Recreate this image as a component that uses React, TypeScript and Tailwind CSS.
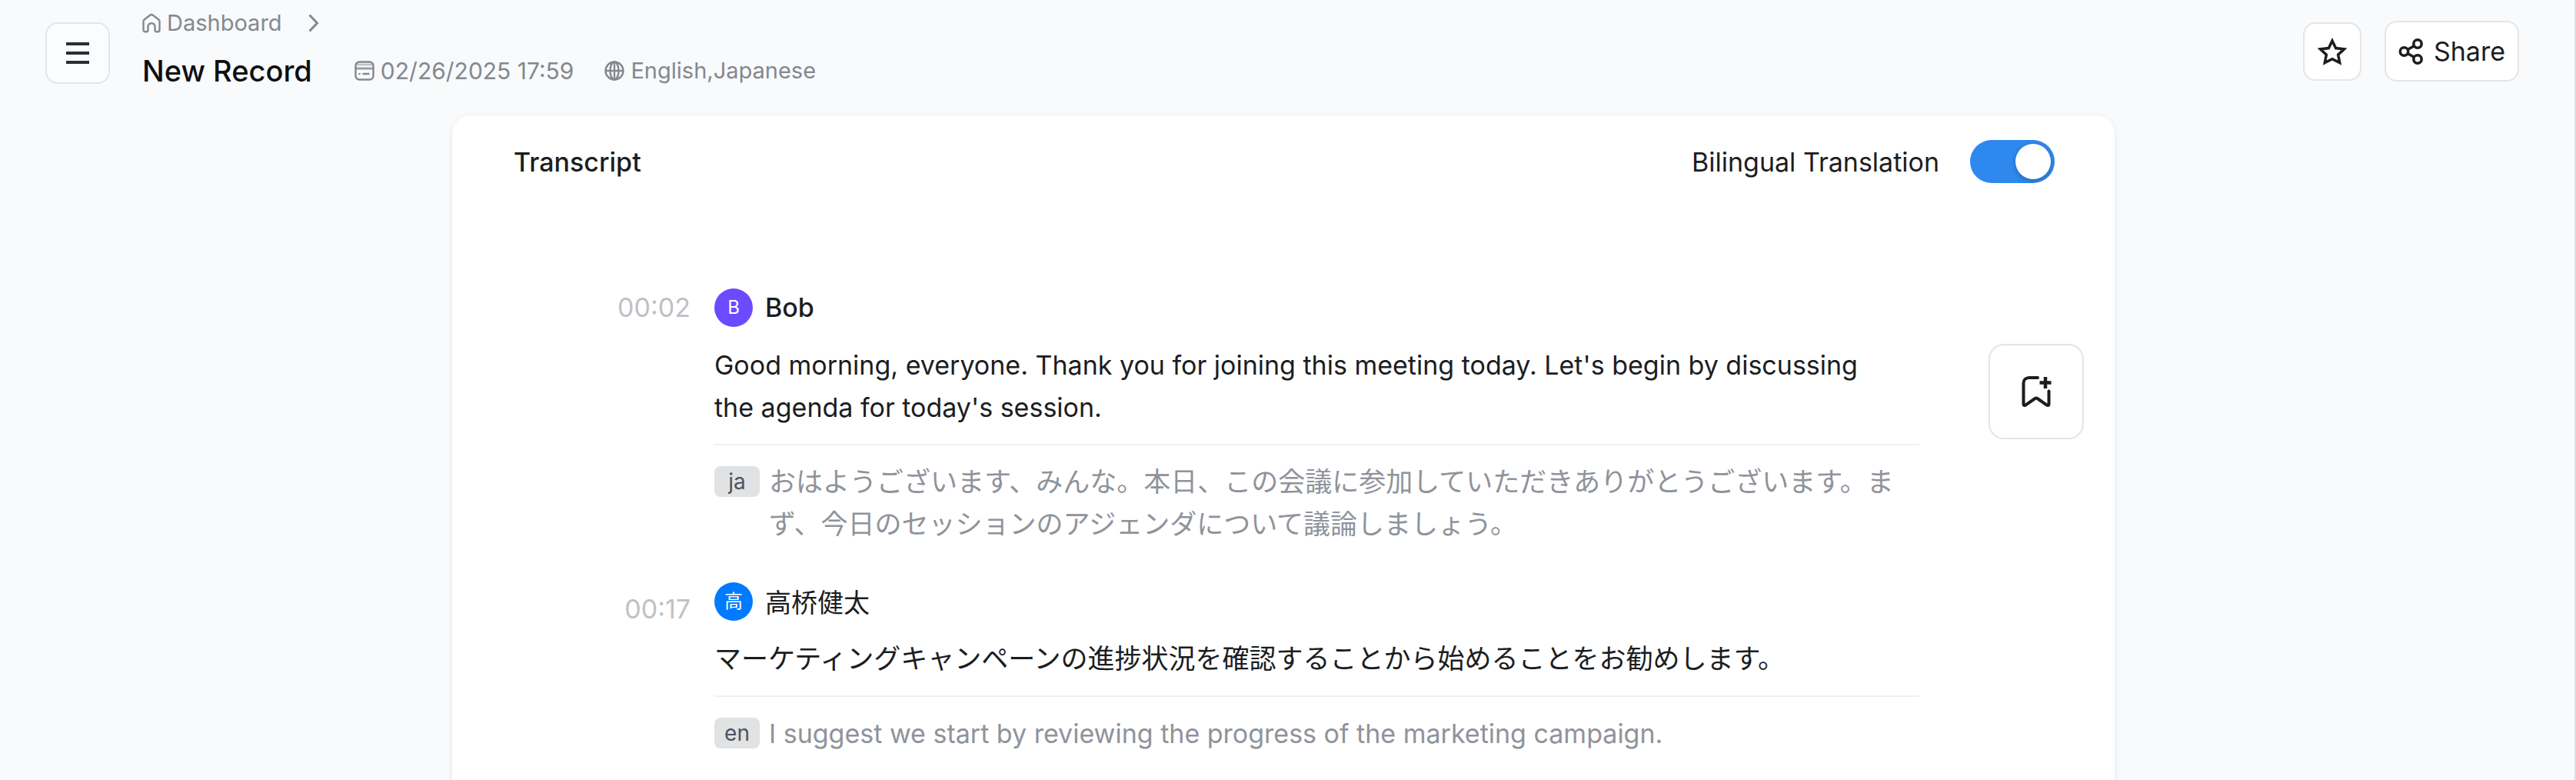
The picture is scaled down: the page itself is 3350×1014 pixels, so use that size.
import { useState } from "react";

function HomeIcon() {
  return (
    <svg viewBox="0 0 24 26" className="h-[26px] w-6 shrink-0" fill="none" stroke="currentColor" strokeWidth="2.4" strokeLinejoin="round" strokeLinecap="round" aria-hidden="true">
      <path d="M1.500 11c0-1.100.5-2 1.400-2.700l7.200-5.600c1.200-.9 2.600-.9 3.800 0l7.200 5.600c.9.700 1.400 1.600 1.400 2.700v11c0 1.300-.9 2.200-2.200 2.200h-1.600c-1.300 0-2.200-.9-2.200-2.200v-4.500c0-2.500-1.600-4.300-4.500-4.300s-4.500 1.800-4.500 4.300V22c0 1.300-.9 2.200-2.200 2.200H3.700c-1.300 0-2.200-.9-2.200-2.200Z" />
    </svg>
  );
}

function CalendarIcon() {
  return (
    <svg viewBox="0 0 26 26" className="size-[26px] shrink-0" fill="none" stroke="currentColor" strokeWidth="2.4" strokeLinecap="round" aria-hidden="true">
      <rect x="1.500" y="1.500" width="23" height="23" rx="5" />
      <path d="M3 5h20" strokeWidth="2.500" opacity=".5" />
      <path d="M2 10h22" strokeWidth="3" opacity=".8" />
      <path d="M6.500 17h.1M11.500 17h7" />
    </svg>
  );
}

function GlobeIcon() {
  return (
    <svg viewBox="0 0 26 26" className="size-[26px] shrink-0" fill="none" stroke="currentColor" strokeWidth="2.4" aria-hidden="true">
      <circle cx="13" cy="13" r="11.500" />
      <ellipse cx="13" cy="13" rx="5.500" ry="11.500" />
      <path d="M1.500 13h23M13 1.500v23" />
    </svg>
  );
}

function StarIcon() {
  return (
    <svg viewBox="0 0 38 36" className="h-9 w-[38px]" fill="none" stroke="currentColor" strokeWidth="3.5" strokeLinejoin="miter" aria-hidden="true">
      <path d="m19 4 4.600 9.600 10.900 1.300-7.900 7.200 2.100 10.400L19 27.600l-9.700 4.900 2.100-10.400-7.900-7.200 10.900-1.300Z" />
    </svg>
  );
}

function ShareIcon() {
  return (
    <svg viewBox="0 0 32 36" className="h-9 w-8" fill="none" stroke="currentColor" strokeWidth="3.5" aria-hidden="true">
      <circle cx="7.500" cy="18" r="5.200" />
      <circle cx="25" cy="8" r="5.200" />
      <circle cx="25" cy="28" r="5.200" />
      <path d="m12 15.500 8.400-4.800M12 20.500l8.400 4.800" />
    </svg>
  );
}

function BookmarkPlusIcon() {
  return (
    <svg viewBox="0 0 40 44" className="h-11 w-10" fill="none" stroke="currentColor" strokeWidth="4" strokeLinecap="round" strokeLinejoin="round" aria-hidden="true">
      <path d="M22 4H11C6.500 4 3.500 7 3.500 11v27.500c0 1.500 1.500 2 2.700 1.200L18.500 31c1-.7 2-.7 3 0l12.300 8.700c1.200.8 2.700.3 2.700-1.200V21.500" />
      <path d="M32 3v15M24.500 10.500h15" strokeLinecap="butt" strokeWidth="4.500" />
    </svg>
  );
}

type Entry = {
  time: string;
  initial: string;
  avatar: string;
  name: string;
  nameClass: string;
  lang: string;
  text: string;
  toLang: string;
  translation: string;
  timeClass: string;
};

const entries: Entry[] = [
  {
    time: "00:02",
    initial: "B",
    avatar: "bg-[#6b4aff]",
    name: "Bob",
    nameClass: "font-medium",
    lang: "en",
    text: "Good morning, everyone. Thank you for joining this meeting today. Let's begin by discussing the agenda for today's session.",
    toLang: "ja",
    translation: "おはようございます、みんな。本日、この会議に参加していただきありがとうございます。まず、今日のセッションのアジェンダについて議論しましょう。",
    timeClass: "pt-0",
  },
  {
    time: "00:17",
    initial: "高",
    avatar: "bg-[#007aff]",
    name: "高桥健太",
    nameClass: "font-['Noto_Sans_CJK_SC',sans-serif] font-normal",
    lang: "ja",
    text: "マーケティングキャンペーンの進捗状況を確認することから始めることをお勧めします。",
    toLang: "en",
    translation: "I suggest we start by reviewing the progress of the marketing campaign.",
    timeClass: "pt-2.5",
  },
];

function TranscriptEntry({ entry }: { entry: Entry }) {
  return (
    <li className="flex gap-[31px]">
      <time className={`w-[310px] shrink-0 text-right leading-[50px] text-[#bfc1c5] ${entry.timeClass}`}>{entry.time}</time>
      <div className="min-w-0 flex-1">
        <div className="flex items-center gap-4">
          <span className={`flex size-[50px] items-center justify-center rounded-full text-2xl text-white ${entry.avatar}`}>{entry.initial}</span>
          <h3 className={`leading-[50px] ${entry.nameClass}`}>{entry.name}</h3>
        </div>
        <p lang={entry.lang} className="mt-[22px] pr-6 leading-[55px]">{entry.text}</p>
        <div className="mt-5 flex gap-3 border-t-2 border-[#f0f1f2] pt-5">
          <span className="mt-[7px] flex h-10 w-[59px] shrink-0 items-center justify-center rounded-lg bg-[#e1e2e4] text-[28px] text-[#4d5260]">{entry.toLang}</span>
          <p lang={entry.toLang} className="pr-6 leading-[55px] text-[#8f939b]">{entry.translation}</p>
        </div>
      </div>
    </li>
  );
}

export default function App() {
  const [bilingual, setBilingual] = useState(true);

  return (
    <div className="flex h-screen flex-col overflow-hidden border-r-2 border-[#dcdee0] bg-[#f8fafc] font-['Inter','Noto_Sans_CJK_JP','Noto_Sans_CJK_SC',sans-serif] text-[34px] text-[#1c1d1f] [&_p:lang(ja)]:text-[35px]">
      <header className="flex h-[150px] shrink-0 items-start justify-between pl-[59px] pr-[72px]">
        <div className="flex items-start">
          <button type="button" aria-label="Open menu" className="mt-[29px] flex h-20 w-[84px] items-center justify-center rounded-2xl border-2 border-[#e4e5e7] bg-[#fbfcfd]">
            <svg viewBox="0 0 30 30" className="size-[30px]" stroke="#2b2c2e" strokeWidth="4" aria-hidden="true">
              <path d="M0 3h30M0 15h30M0 27h30" />
            </svg>
          </button>
          <div className="ml-[42px] pt-2.5">
            <nav aria-label="Breadcrumb" className="flex h-10 items-center text-[29px] text-[#84888f]">
              <a href="#dashboard" className="flex items-center gap-2">
                <HomeIcon />
                Dashboard
              </a>
              <svg viewBox="0 0 14 24" className="ml-[34px] h-6 w-3.5" fill="none" stroke="currentColor" strokeWidth="3" aria-hidden="true">
                <path d="m1.500 1.500 10 10.500-10 10.500" />
              </svg>
            </nav>
            <div className="mt-[17px] flex h-[50px] items-center text-[29px] text-[#84888f]">
              <h1 className="text-[38px] font-medium text-[#0e0f11]">New Record</h1>
              <span className="ml-[55px] flex items-center gap-2 text-[30px]">
                <CalendarIcon />
                <time dateTime="2025-02-26T17:59">02/26/2025 17:59</time>
              </span>
              <span className="ml-10 flex items-center gap-2">
                <GlobeIcon />
                English,Japanese
              </span>
            </div>
          </div>
        </div>
        <div className="mt-[27px] flex items-center gap-[30px]">
          <button type="button" aria-label="Add to favorites" className="flex size-[76px] items-center justify-center rounded-2xl border-2 border-[#e4e5e7] bg-white">
            <StarIcon />
          </button>
          <button type="button" className="flex h-[79px] items-center gap-3.5 rounded-2xl border-2 border-[#e4e5e7] bg-white px-4">
            <ShareIcon />
            Share
          </button>
        </div>
      </header>

      <main className="flex min-h-0 flex-1 justify-center pr-[10px]">
        <section aria-label="Transcript" className="relative w-full max-w-[2162px] rounded-t-3xl bg-white shadow-[0_2px_8px_rgba(0,0,0,0.08)]">
          <div className="flex h-[120px] items-center justify-between pl-20 pr-[78px]">
            <h2 className="font-medium">Transcript</h2>
            <label className="flex cursor-pointer items-center gap-10">
              Bilingual Translation
              <span className="relative flex">
                <input
                  type="checkbox"
                  role="switch"
                  checked={bilingual}
                  onChange={(e) => setBilingual(e.target.checked)}
                  className="peer h-14 w-[110px] cursor-pointer appearance-none rounded-full bg-[#c9ccd1] checked:bg-[#2f88ee]"
                />
                <span className="pointer-events-none absolute left-[5px] top-[5px] size-[46px] rounded-full bg-white shadow-[0_2px_6px_rgba(0,0,0,0.25)] peer-checked:left-[59px]" />
              </span>
            </label>
          </div>
          <ul className="mt-[105px] flex flex-col gap-12 pr-[254px]">
            {entries.map((entry) => (
              <TranscriptEntry key={entry.time} entry={entry} />
            ))}
          </ul>
          <button type="button" aria-label="Add bookmark" className="absolute right-10 top-[297px] flex size-[124px] items-center justify-center rounded-[20px] border-2 border-[#e4e5e7] bg-white">
            <BookmarkPlusIcon />
          </button>
        </section>
      </main>
    </div>
  );
}
